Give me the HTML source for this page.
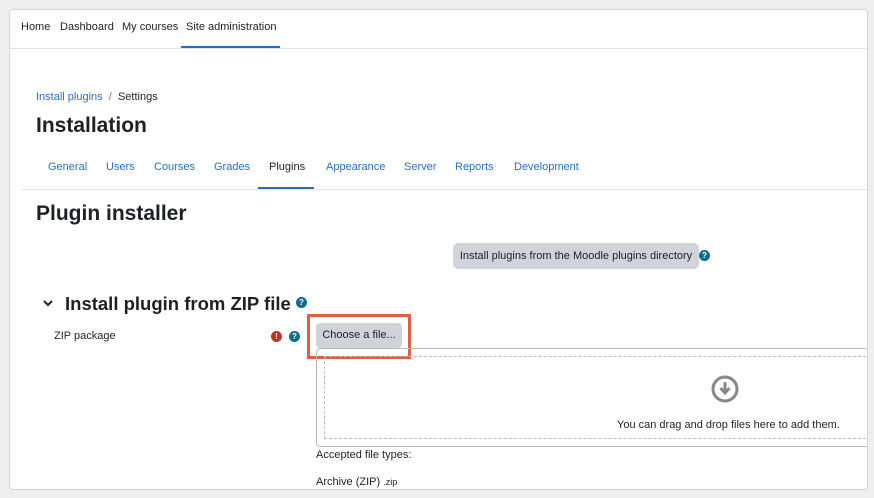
<!DOCTYPE html>
<html><head><style>
body{margin:0;width:874px;height:498px;background:#efefef;font-family:"Liberation Sans",sans-serif;position:relative;overflow:hidden;color:#1d2125}
.p{position:absolute;left:9px;top:9px;width:857px;height:479px;background:#fff;border:1px solid #d4d4d4;border-radius:4px;overflow:hidden}
.a{position:absolute;white-space:nowrap}
.s{font-size:11px}
.blue{color:#2a6ebb}
.help{position:absolute;width:11px;height:11px;border-radius:50%;background:#0f6d8c;color:#fff;font-size:8px;font-weight:bold;text-align:center;line-height:11px}
</style></head><body>
<div class="p">
<div class="a s" style="left:11px;top:11px">Home</div>
<div class="a s" style="left:50px;top:11px">Dashboard</div>
<div class="a s" style="left:112px;top:11px">My courses</div>
<div class="a s" style="left:176px;top:11px">Site administration</div>
<div class="a" style="left:0;top:38px;width:857px;height:1px;background:#e3e3e3"></div>
<div class="a" style="left:171px;top:36px;width:99px;height:2px;background:#2a6ebb"></div>
<div class="a s" style="left:26px;top:81px"><span class="blue">Install plugins</span> <span style="color:#777">&nbsp;/&nbsp;</span> Settings</div>
<div class="a" style="left:26px;top:104px;font-size:21px;font-weight:bold">Installation</div>
<div class="a s blue" style="left:38px;top:151px">General</div>
<div class="a s blue" style="left:96px;top:151px">Users</div>
<div class="a s blue" style="left:144px;top:151px">Courses</div>
<div class="a s blue" style="left:204px;top:151px">Grades</div>
<div class="a s" style="left:259px;top:151px">Plugins</div>
<div class="a s blue" style="left:316px;top:151px">Appearance</div>
<div class="a s blue" style="left:394px;top:151px">Server</div>
<div class="a s blue" style="left:445px;top:151px">Reports</div>
<div class="a s blue" style="left:504px;top:151px">Development</div>
<div class="a" style="left:248px;top:177px;width:56px;height:2px;background:#2a6ebb"></div>
<div class="a" style="left:11px;top:179px;width:846px;height:1px;background:#e3e3e3"></div>
<div class="a" style="left:26px;top:192px;font-size:21px;font-weight:bold">Plugin installer</div>
<div class="a s" style="left:443px;top:233px;width:246px;height:26px;background:#ced4da;border-radius:5px;line-height:26px;text-align:center">Install plugins from the Moodle plugins directory</div>
<div class="help" style="left:689px;top:240px">?</div>
<svg class="a" style="left:32px;top:288px" width="12" height="10"><path d="M2 3l4 4 4-4" stroke="#1d2125" stroke-width="2" fill="none"/></svg>
<div class="a" style="left:55px;top:283px;font-size:18.5px;font-weight:bold">Install plugin from ZIP file</div>
<div class="help" style="left:286px;top:287px">?</div>
<div class="a s" style="left:44px;top:320px">ZIP package</div>
<div class="help" style="left:261px;top:321px;background:#c9302c">!</div>
<div class="help" style="left:279px;top:321px">?</div>
<div class="a s" style="left:306px;top:313px;width:86px;height:25px;background:#ced4da;border-radius:4px;line-height:25px;text-align:center">Choose a file...</div>
<div class="a" style="left:297px;top:304px;width:98px;height:39px;border:3px solid #e0603f"></div>
<div class="a" style="left:306px;top:338px;width:560px;height:97px;border:1px solid #bbb;border-radius:4px"></div>
<div class="a" style="left:314px;top:346px;width:560px;height:81px;border:1px dashed #bbb"></div>
<svg class="a" style="left:701px;top:365px" width="28" height="28"><circle cx="14" cy="14" r="12" fill="none" stroke="#888" stroke-width="3"/><path d="M14 7v10M9.5 13l4.5 5 4.5-5" stroke="#888" stroke-width="3" fill="none"/></svg>
<div class="a s" style="left:607px;top:409px">You can drag and drop files here to add them.</div>
<div class="a s" style="left:306px;top:439px">Accepted file types:</div>
<div class="a s" style="left:306px;top:466px">Archive (ZIP) <span style="font-size:9px">.zip</span></div>
</div>
</body></html>
